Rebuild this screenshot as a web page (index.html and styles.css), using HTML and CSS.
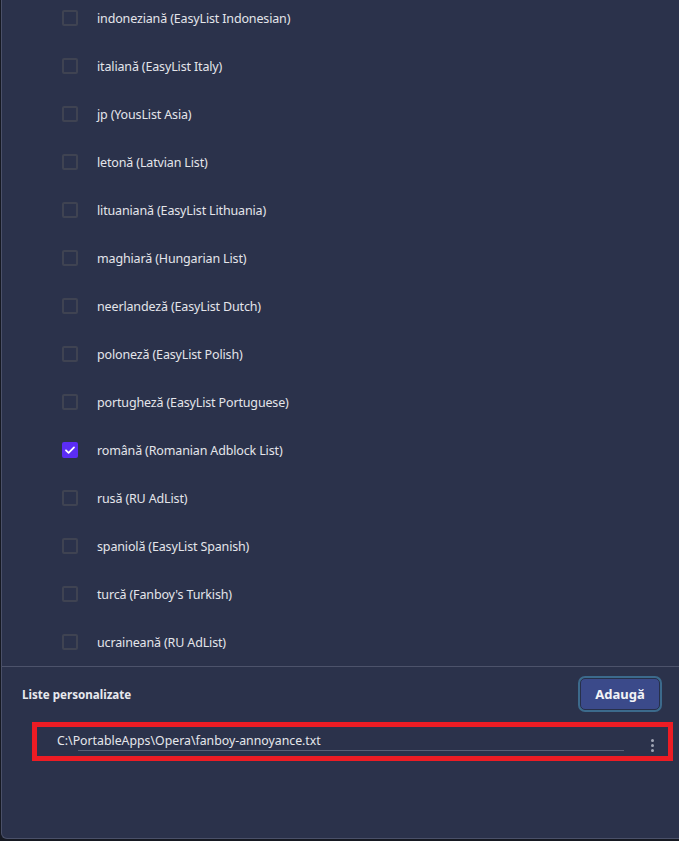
FILE: index.html
```html
<!DOCTYPE html>
<html lang="ro">
<head>
<meta charset="utf-8">
<link rel="stylesheet" href="styles.css">
</head>
<body>
<div class="panel">
  <ul class="lists">
    <li class="row"><span class="cb"></span><span class="label">indoneziană (EasyList Indonesian)</span></li>
    <li class="row"><span class="cb"></span><span class="label">italiană (EasyList Italy)</span></li>
    <li class="row"><span class="cb"></span><span class="label">jp (YousList Asia)</span></li>
    <li class="row"><span class="cb"></span><span class="label">letonă (Latvian List)</span></li>
    <li class="row"><span class="cb"></span><span class="label">lituaniană (EasyList Lithuania)</span></li>
    <li class="row"><span class="cb"></span><span class="label">maghiară (Hungarian List)</span></li>
    <li class="row"><span class="cb"></span><span class="label">neerlandeză (EasyList Dutch)</span></li>
    <li class="row"><span class="cb"></span><span class="label">poloneză (EasyList Polish)</span></li>
    <li class="row"><span class="cb"></span><span class="label">portugheză (EasyList Portuguese)</span></li>
    <li class="row"><span class="cb checked"><svg viewBox="0 0 16 16" width="16" height="16"><path d="M4 8.3l2.6 2.5L12 5.4" fill="none" stroke="#fff" stroke-width="1.8" stroke-linecap="round" stroke-linejoin="round"/></svg></span><span class="label">română (Romanian Adblock List)</span></li>
    <li class="row"><span class="cb"></span><span class="label">rusă (RU AdList)</span></li>
    <li class="row"><span class="cb"></span><span class="label">spaniolă (EasyList Spanish)</span></li>
    <li class="row"><span class="cb"></span><span class="label">turcă (Fanboy's Turkish)</span></li>
    <li class="row"><span class="cb"></span><span class="label">ucraineană (RU AdList)</span></li>
  </ul>
  <section class="custom">
    <div class="custom-head">
      <h3 class="custom-title">Liste personalizate</h3>
      <button class="add-btn">Adaugă</button>
    </div>
    <div class="custom-item">
      <span class="path">C:\PortableApps\Opera\fanboy-annoyance.txt</span>
      <span class="kebab"><i></i><i></i><i></i></span>
      <span class="underline"></span>
    </div>
    <div class="highlight"></div>
  </section>
</div>
</body>
</html>
```
FILE: styles.css
```css
html, body {
  margin: 0;
  padding: 0;
}
body {
  background: #161922;
  width: 679px;
  height: 841px;
  overflow: hidden;
  font-family: "Noto Sans", "Open Sans", sans-serif;
  color: #e6e7ec;
}
.panel {
  position: relative;
  margin-left: 1px;
  height: 838px;
  background: #2b324b;
  border-left: 1px solid #4a5068;
  border-bottom: 1px solid #4a5068;
  border-bottom-left-radius: 6px;
  overflow: hidden;
}
.lists {
  list-style: none;
  margin: -6px 0 0 0;
  padding: 0;
  border-bottom: 1px solid #4d536b;
}
.row {
  height: 48px;
  display: flex;
  align-items: center;
  padding-left: 60px;
}
.cb {
  width: 12px;
  height: 12px;
  border: 2px solid #3f4352;
  border-radius: 2px;
  box-sizing: content-box;
  flex: none;
  display: flex;
  align-items: center;
  justify-content: center;
}
.cb.checked {
  background: #5b2df5;
  border-color: #5b2df5;
}
.cb svg {
  flex: none;
  margin: -2px;
}
.label {
  margin-left: 19px;
  font-size: 12.5px;
  letter-spacing: -0.15px;
  color: #e4e5ea;
}
.custom {
  position: relative;
  padding: 7px 17px 0 20px;
}
.custom-head {
  display: flex;
  align-items: center;
  justify-content: space-between;
  height: 40px;
}
.custom-title {
  margin: 0;
  font-size: 11.6px;
  font-weight: 700;
  color: #e8e9ee;
}
.add-btn {
  width: 80px;
  height: 32px;
  margin-right: 2px;
  background: #3b4a8a;
  color: #f2f3f7;
  font-family: inherit;
  font-size: 13px;
  font-weight: 700;
  border: 1px solid #27304a;
  border-radius: 5px;
  box-shadow: 0 0 0 2px #3c6a8c;
  padding: 0;
}
.custom-item {
  position: relative;
  height: 40px;
  margin-top: 9px;
  display: flex;
  align-items: center;
  padding-left: 35px;
}
.path {
  font-size: 12.3px;
  color: #e6e7ec;
  margin-top: -5px;
}
.underline {
  position: absolute;
  left: 56px;
  width: 546px;
  top: 27px;
  height: 1px;
  background: #5a6077;
}
.kebab {
  position: absolute;
  left: 629px;
  top: 16px;
  display: flex;
  flex-direction: column;
  gap: 2px;
}
.kebab i {
  display: block;
  width: 3px;
  height: 3px;
  border-radius: 50%;
  background: #a0a5b4;
}
.highlight {
  position: absolute;
  left: 30px;
  top: 55px;
  width: 631px;
  height: 29px;
  border: 5px solid #ed1c24;
}
```
